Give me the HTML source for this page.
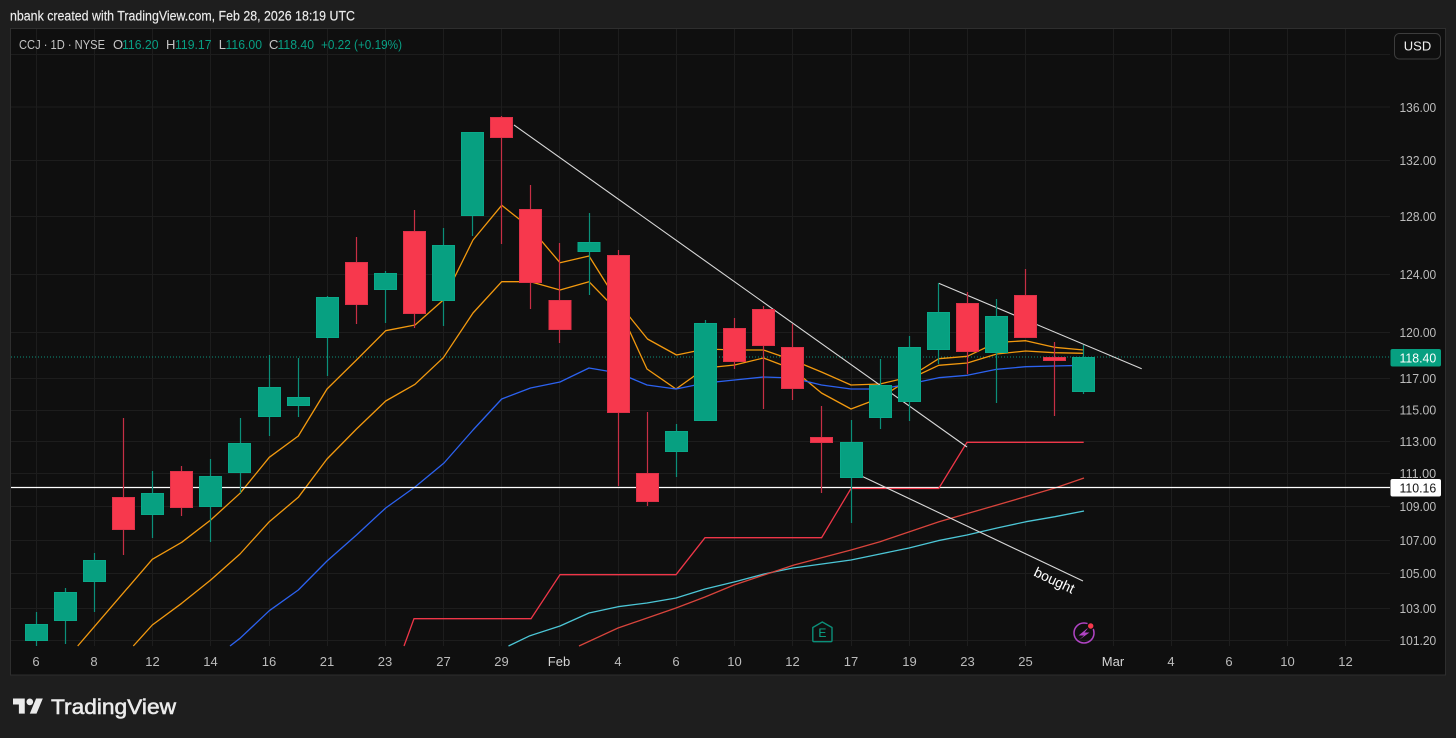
<!DOCTYPE html>
<html><head><meta charset="utf-8"><style>
html,body{margin:0;padding:0;background:#1e1e1e;width:1456px;height:738px;overflow:hidden}
svg{display:block;font-family:"Liberation Sans",sans-serif}
.g{fill:#07a081;stroke:#0aa98a;stroke-width:1}
.r{fill:#f7384d;stroke:#e03249;stroke-width:1}
.ax text{font-size:13px;fill:#bcbcbc}
.l text{font-size:13px}
</style></head><body>
<svg width="1456" height="738" viewBox="0 0 1456 738">
<rect width="1456" height="738" fill="#1e1e1e"/>
<text x="10" y="20.5" font-size="13.5" fill="#ececec" stroke="#ececec" stroke-width=".15" textLength="345" lengthAdjust="spacingAndGlyphs">nbank created with TradingView.com, Feb 28, 2026 18:19 UTC</text>
<rect x="10.5" y="28.5" width="1435" height="646.5" fill="#0f0f0f" stroke="#2e2e2e"/>
<!-- grid -->
<path stroke="#1d1d1d" fill="none" d="M11 54.5H1390M11 107H1390M11 160.5H1390M11 216.5H1390M11 274.5H1390M11 332.5H1390M11 378.5H1390M11 410.5H1390M11 441.5H1390M11 473.5H1390M11 506.5H1390M11 540.5H1390M11 573.5H1390M11 608.5H1390M11 640.5H1390M36.5 29V646M94.5 29V646M152.5 29V646M210.5 29V646M269.5 29V646M327.5 29V646M385.5 29V646M443.5 29V646M501.5 29V646M559.5 29V646M618.5 29V646M676.5 29V646M734.5 29V646M792.5 29V646M851.5 29V646M909.5 29V646M967.5 29V646M1025.5 29V646M1113.5 29V646M1171.5 29V646M1229.5 29V646M1287.5 29V646M1345.5 29V646"/>
<!-- price lines -->
<path d="M11 357H1390" stroke="#0b8f79" stroke-width="1" stroke-dasharray="1 2" fill="none"/>
<!-- indicators -->
<g fill="none" stroke-width="1.3" stroke-linejoin="round">
<polyline stroke="#f2990f" points="77.7,646 152.3,559.3 181.7,542.3 210.7,520 240,493.3 269.3,457.3 298.3,436 327,389 356.5,360 385.7,330.7 415,325 443.3,300 473,240 501.7,205.3 530.5,228 560,262.7 589,256 618.5,303 647.5,339 676.5,355 705.5,349 734.5,350 763.5,350 792.5,360 821.5,372 851,385 880,384 909.5,377 938.7,358.7 967.3,356.3 996.5,342.5 1025.7,340.7 1054.3,347.3 1083.7,350"/>
<polyline stroke="#f2990f" points="133.3,646 152.3,625 181.7,603.3 210.7,580 240,554 269.3,521.7 298.3,497.3 327,459 356.5,429 385.7,401 415,384.3 443.3,357.7 473,313 501.7,281.7 530.5,281.7 560,290 589,281.7 618.5,312 630,332 647,369 676,389 705.5,368 734.5,365 763.5,358 792.5,369 821.5,393 851,409 880,398 909.5,379 938.7,365.3 967.3,363 996.7,354 1025.7,351 1054.3,352.7 1083.7,353.3"/>
<polyline stroke="#2c62f0" points="230,646 240,638.3 269.3,610.7 298.3,590 327,561 356.5,535 385.7,508 415,487 444,463 473,430 501.7,399 530.5,388 560,382 589,368 618.5,373 647,385 676,389 705.5,383 734.5,380 763.5,377 792.5,378 821.5,385 851,389 880,389 909.5,384 938.7,377.7 967.3,375.3 996.7,369.3 1025.7,366.7 1054.3,366 1083.7,365.3"/>
<polyline stroke="#4cc6d6" points="508.5,646 530,635.7 560,626 589,613 618,606.7 647,603 676,598 705,589 735,581.7 764,574 793,568 822,564 851,560 880,554 909,548 938,540.7 967,535 997,528 1026,521.7 1055,516.7 1084,511"/>
<polyline stroke="#d8443c" points="579,646 618,628 676,608 705,597 734,585 794,565 851,550 880,541.7 939,521.7 997,505 1055,488 1084,478"/>
</g>
<!-- trend lines and horizontal -->
<path d="M11 487.5H1390" stroke="#ffffff" stroke-width="1.3" fill="none"/>
<g fill="none" stroke-width="1.3">
<polyline stroke="#ef3648" points="404,646 414,618.7 531,618.7 560,574.7 676,574.7 705,537.7 821.6,537.7 851,488.5 938.7,488.5 967,442.3 1083.7,442.3"/>
</g>
<path d="M514 125L967 447M938.7 283.3L1141.7 368.7M863 476.7L1083 581" stroke="#d8d8d8" stroke-width="1.1" fill="none"/>
<!-- wicks -->
<path fill="none" stroke="#0b8f79" stroke-width="1.2" d="M36.5 612V646M65.5 588V644M94.5 553V612M152.5 471V538M210.5 459V542M240.5 418V493M269.5 355V436M298.5 358V417M327.5 296V376M385.5 271V323M443.5 228V326M472.5 216V236M589.5 213V295M676.5 424V477M705.5 320V421M851.5 420V523M880.5 359V429M909.5 336V421M938.5 283V364M996.5 299V403M1083.5 345V394"/>
<path fill="none" stroke="#c72f45" stroke-width="1.2" d="M123.5 418V555M181.5 466V516M356.5 237V324M414.5 210V328M501.5 116V244M530.5 185V309M559.5 243V343M618.5 250V486M647.5 412V506M734.5 318V369M763.5 306V409M792.5 324V400M821.5 406V493M967.5 292V374M1025.5 269V338M1054.5 342V416"/>
<!-- bodies -->
<g>
<rect class="g" x="25.5" y="624.5" width="22" height="16"/>
<rect class="g" x="54.5" y="592.5" width="22" height="28"/>
<rect class="g" x="83.5" y="560.5" width="22" height="21"/>
<rect class="r" x="112.5" y="497.5" width="22" height="32"/>
<rect class="g" x="141.5" y="493.5" width="22" height="21"/>
<rect class="r" x="170.5" y="471.5" width="22" height="36"/>
<rect class="g" x="199.5" y="476.5" width="22" height="30"/>
<rect class="g" x="228.5" y="443.5" width="22" height="29"/>
<rect class="g" x="258.5" y="387.5" width="22" height="29"/>
<rect class="g" x="287.5" y="397.5" width="22" height="8"/>
<rect class="g" x="316.5" y="297.5" width="22" height="40"/>
<rect class="r" x="345.5" y="262.5" width="22" height="42"/>
<rect class="g" x="374.5" y="273.5" width="22" height="16"/>
<rect class="r" x="403.5" y="231.5" width="22" height="82"/>
<rect class="g" x="432.5" y="245.5" width="22" height="55"/>
<rect class="g" x="461.5" y="132.5" width="22" height="83"/>
<rect class="r" x="490.5" y="117.5" width="22" height="20"/>
<rect class="r" x="519.5" y="209.5" width="22" height="73"/>
<rect class="r" x="549" y="300.5" width="22" height="29"/>
<rect class="g" x="578" y="242.5" width="22" height="9"/>
<rect class="r" x="607.5" y="255.5" width="22" height="157"/>
<rect class="r" x="636.5" y="473.5" width="22" height="28"/>
<rect class="g" x="665.5" y="431.5" width="22" height="20"/>
<rect class="g" x="694.5" y="323.5" width="22" height="97"/>
<rect class="r" x="723.5" y="328.5" width="22" height="33"/>
<rect class="r" x="752.5" y="309.5" width="22" height="36"/>
<rect class="r" x="781.5" y="347.5" width="22" height="41"/>
<rect class="r" x="810.5" y="437.5" width="22" height="5"/>
<rect class="g" x="840.5" y="442.5" width="22" height="35"/>
<rect class="g" x="869.5" y="385.5" width="22" height="32"/>
<rect class="g" x="898.5" y="347.5" width="22" height="54"/>
<rect class="g" x="927.5" y="312.5" width="22" height="37"/>
<rect class="r" x="956.5" y="303.5" width="22" height="48"/>
<rect class="g" x="985.5" y="316.5" width="22" height="36"/>
<rect class="r" x="1014.5" y="295.5" width="22" height="42"/>
<rect class="r" x="1043.5" y="357.5" width="22" height="3"/>
<rect class="g" x="1072.5" y="357.5" width="22" height="34"/>
</g>
<!-- bought -->
<text x="1054" y="585" font-size="14" fill="#ffffff" text-anchor="middle" transform="rotate(25.3 1054 581)" textLength="43" lengthAdjust="spacingAndGlyphs">bought</text>
<!-- earnings icon -->
<path d="M822.3 622L812.8 627.5V640.5Q812.8 641.7 814 641.7H830.8Q832 641.7 832 640.5V627.5Z" fill="none" stroke="#0b8f79" stroke-width="1.4" stroke-linejoin="round"/>
<text x="822.4" y="637" font-size="12" fill="#0ba88a" text-anchor="middle">E</text>
<!-- lightning icon -->
<circle cx="1084" cy="633" r="10" fill="none" stroke="#b044c4" stroke-width="1.5"/>
<path d="M1089 627L1078.5 635.5H1084L1079 640L1089.5 632.5H1084.5Z" fill="#b044c4"/>
<circle cx="1090.7" cy="626" r="4" fill="#0f0f0f"/>
<circle cx="1090.7" cy="626" r="2.7" fill="#f7384d"/>
<!-- legend -->
<g class="l">
<text x="19" y="49" fill="#c4c4c4" textLength="86" lengthAdjust="spacingAndGlyphs">CCJ · 1D · NYSE</text>
<text x="113" y="49" fill="#c4c4c4">O</text><text x="122" y="49" fill="#089f84" textLength="36.5" lengthAdjust="spacingAndGlyphs">116.20</text>
<text x="166" y="49" fill="#c4c4c4">H</text><text x="175" y="49" fill="#089f84" textLength="36.5" lengthAdjust="spacingAndGlyphs">119.17</text>
<text x="218.7" y="49" fill="#c4c4c4">L</text><text x="225.5" y="49" fill="#089f84" textLength="36.5" lengthAdjust="spacingAndGlyphs">116.00</text>
<text x="269" y="49" fill="#c4c4c4">C</text><text x="277.5" y="49" fill="#089f84" textLength="36.5" lengthAdjust="spacingAndGlyphs">118.40</text>
<text x="321" y="49" fill="#089f84" textLength="81" lengthAdjust="spacingAndGlyphs">+0.22 (+0.19%)</text>
</g>
<!-- USD -->
<rect x="1394.5" y="33.5" width="46" height="25.5" rx="5" fill="#0f0f0f" stroke="#3c3c3c"/>
<text x="1417.5" y="50.5" font-size="13" fill="#f0f0f0" text-anchor="middle">USD</text>
<!-- price axis -->
<g class="ax">
<text x="1399.5" y="112" textLength="36.7" lengthAdjust="spacingAndGlyphs">136.00</text>
<text x="1399.5" y="165" textLength="36.7" lengthAdjust="spacingAndGlyphs">132.00</text>
<text x="1399.5" y="221" textLength="36.7" lengthAdjust="spacingAndGlyphs">128.00</text>
<text x="1399.5" y="279" textLength="36.7" lengthAdjust="spacingAndGlyphs">124.00</text>
<text x="1399.5" y="337" textLength="36.7" lengthAdjust="spacingAndGlyphs">120.00</text>
<text x="1399.5" y="383" textLength="36.7" lengthAdjust="spacingAndGlyphs">117.00</text>
<text x="1399.5" y="414.5" textLength="36.7" lengthAdjust="spacingAndGlyphs">115.00</text>
<text x="1399.5" y="446" textLength="36.7" lengthAdjust="spacingAndGlyphs">113.00</text>
<text x="1399.5" y="478" textLength="36.7" lengthAdjust="spacingAndGlyphs">111.00</text>
<text x="1399.5" y="511" textLength="36.7" lengthAdjust="spacingAndGlyphs">109.00</text>
<text x="1399.5" y="545" textLength="36.7" lengthAdjust="spacingAndGlyphs">107.00</text>
<text x="1399.5" y="578" textLength="36.7" lengthAdjust="spacingAndGlyphs">105.00</text>
<text x="1399.5" y="613" textLength="36.7" lengthAdjust="spacingAndGlyphs">103.00</text>
<text x="1399.5" y="645" textLength="36.7" lengthAdjust="spacingAndGlyphs">101.20</text>
</g>
<rect x="1390.5" y="349" width="50.5" height="17.5" rx="2" fill="#07a081"/>
<text x="1399.5" y="362.5" font-size="13" fill="#ffffff" textLength="36.7" lengthAdjust="spacingAndGlyphs">118.40</text>
<rect x="1390.5" y="479" width="50.5" height="17.5" rx="2" fill="#ffffff"/>
<text x="1399.5" y="492.5" font-size="13" fill="#111111" textLength="36.7" lengthAdjust="spacingAndGlyphs">110.16</text>
<!-- time axis -->
<g class="ax" text-anchor="middle">
<text x="36" y="666">6</text><text x="94" y="666">8</text><text x="152.5" y="666">12</text><text x="210.5" y="666">14</text><text x="269" y="666">16</text><text x="327" y="666">21</text><text x="385" y="666">23</text><text x="443.5" y="666">27</text><text x="501.5" y="666">29</text>
<text x="559" y="666" style="fill:#d6d6d6">Feb</text>
<text x="618" y="666">4</text><text x="676" y="666">6</text><text x="734.5" y="666">10</text><text x="792.5" y="666">12</text><text x="851" y="666">17</text><text x="909.5" y="666">19</text><text x="967.5" y="666">23</text><text x="1025.5" y="666">25</text>
<text x="1113" y="666" style="fill:#d6d6d6">Mar</text>
<text x="1171" y="666">4</text><text x="1229" y="666">6</text><text x="1287.5" y="666">10</text><text x="1345.5" y="666">12</text>
</g>
<!-- logo -->
<g transform="translate(13 695.2) scale(.84)" fill="#ebebeb">
<path d="M14 22H7V11H0V4h14v18zM28 22h-8l7.5-18h8L28 22z"/><circle cx="20" cy="8" r="4"/>
</g>
<text x="51" y="714" font-size="21" fill="#ebebeb" stroke="#ebebeb" stroke-width=".55" textLength="125" lengthAdjust="spacingAndGlyphs">TradingView</text>
</svg>
</body></html>
